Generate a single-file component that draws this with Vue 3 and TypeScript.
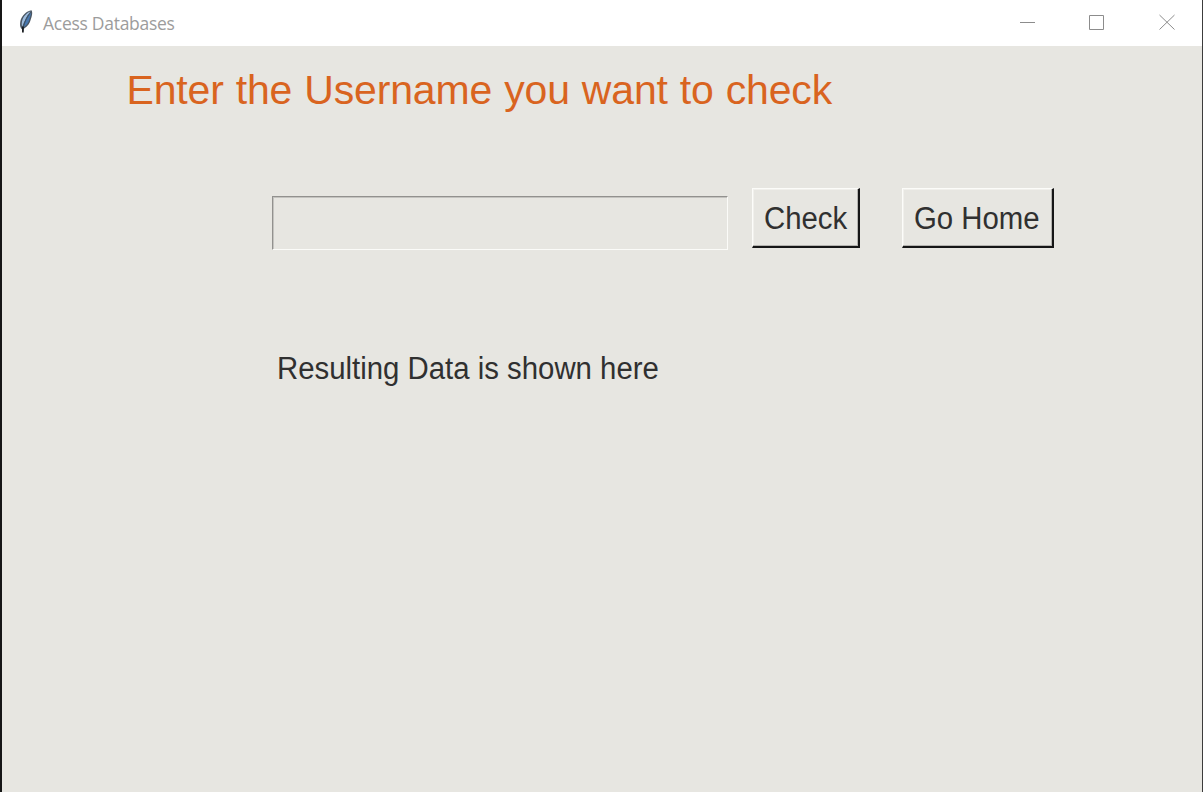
<script setup lang="ts">
import { ref } from 'vue'

const username = ref('')
const result = ref('Resulting Data is shown here')
</script>

<template>
  <div class="window">
    <header class="titlebar">
      <svg class="feather" width="16" height="26" viewBox="0 0 16 26">
        <path d="M13.500 1.200C8.500 2 3.600 6.500 2.400 12c-.6 3-.5 5.500.8 7.500l1.300 1.200 2-1.400c3.400-2.300 5.400-5 6.100-8.300C13.800 7.500 15 3.800 13.500 1.200z" fill="#4a5663" />
        <path d="M12.600 2.300C8.600 4 5 7.600 4 12.500c-.4 2.200-.3 4 .2 5.500C6 13 8.500 7.500 12.600 2.300z" fill="#9dbbdc" />
        <path d="M13 3.500C9.800 8 7 13 5.600 18.200c2.900-1.700 5-4.300 5.600-7.400.5-2.600 2-4.800 1.800-7.300z" fill="#4878b0" />
        <path d="M10.500 5.500C7.500 10 5.500 16 4.900 22" fill="none" stroke="#34506f" stroke-width=".8" />
        <path d="M4.900 17.500v6" stroke="#15181c" stroke-width="1.700" />
      </svg>
      <span class="caption">Acess Databases</span>
      <div class="controls">
        <svg width="15" height="16" viewBox="0 0 15 16"><path d="M0 8.500h15" /></svg>
        <svg width="15" height="16" viewBox="0 0 15 16"><path d="M.5 1.500h14v14H.5z" /></svg>
        <svg width="16" height="16" viewBox="0 0 16 16"><path d="M.5 1l15 14.500M15.500 1L.5 15.500" /></svg>
      </div>
    </header>
    <main class="content">
      <h1>Enter the Username you want to check</h1>
      <form class="row" @submit.prevent>
        <input v-model="username" class="entry" type="text" aria-label="Username" />
        <button class="btn check" type="button"><span>Check</span></button>
        <button class="btn home" type="button"><span>Go Home</span></button>
      </form>
      <p class="result">{{ result }}</p>
    </main>
  </div>
</template>

<style>
body {
  margin: 0;
  overflow: hidden;
}
</style>

<style scoped>
.window {
  box-sizing: border-box;
  width: 1203px;
  height: 792px;
  border-left: 2px solid #161616;
  border-right: 1px solid #3c3c3c;
  background: #e7e6e1;
  font-family: "Liberation Sans", Arial, sans-serif;
}
.titlebar {
  box-sizing: border-box;
  display: flex;
  align-items: center;
  height: 46px;
  padding-left: 16px;
  background: #fff;
}
.feather {
  margin-bottom: 2px;
}
.caption {
  margin: 0 0 1px 9px;
  color: #9c9c9c;
  font-family: "Open Sans", "Noto Sans", sans-serif;
  font-size: 17.5px;
  font-weight: 400;
  letter-spacing: -0.28px;
  line-height: 24px;
  white-space: nowrap;
}
.controls {
  display: flex;
  align-items: center;
  gap: 54px;
  margin: 0 27px 2px auto;
}
.controls svg {
  fill: none;
  stroke: #8c8c8c;
  stroke-width: 1;
}
.controls svg:last-child {
  margin-left: 1px;
}
.content {
  display: flex;
  flex-direction: column;
}
h1 {
  margin: 20px 0 0 124.5px;
  color: #d9641f;
  font-size: 41px;
  font-weight: 400;
  letter-spacing: -0.16px;
  word-spacing: 0.8px;
  line-height: 48px;
  white-space: nowrap;
}
.row {
  display: flex;
  align-items: flex-start;
  margin: 74px 0 0 270px;
}
.entry {
  box-sizing: border-box;
  width: 456px;
  height: 54px;
  margin: 8px 24px 0 0;
  padding: 0 8px;
  border: 1px solid;
  border-color: #92918e #fbfbf8 #fbfbf8 #92918e;
  border-radius: 0;
  outline: none;
  background: transparent;
  box-shadow: inset 1px 1px #c4c3bf;
  font: 30px "Liberation Sans", Arial, sans-serif;
}
.btn {
  box-sizing: border-box;
  display: flex;
  align-items: center;
  height: 60px;
  padding: 3px 0 0 11px;
  border: solid;
  border-width: 1px 2px 2px 1px;
  border-color: #fcfcf9 #161616 #161616 #fcfcf9;
  border-radius: 0;
  background: #e7e6e1;
  box-shadow: inset -1px -1px #b4b3af, inset 1px 1px #f1f0ec;
  color: #303030;
  font: 31px/36px "Liberation Sans", Arial, sans-serif;
  white-space: nowrap;
}
.btn span,
.result {
  transform: scaleX(0.947);
  transform-origin: left;
}
.check {
  width: 108px;
  margin-right: 42px;
}
.home {
  width: 152px;
}
.result {
  align-self: flex-start;
  margin: 101px 0 0 274.5px;
  color: #303030;
  font-size: 31px;
  line-height: 36px;
  white-space: nowrap;
}
</style>
